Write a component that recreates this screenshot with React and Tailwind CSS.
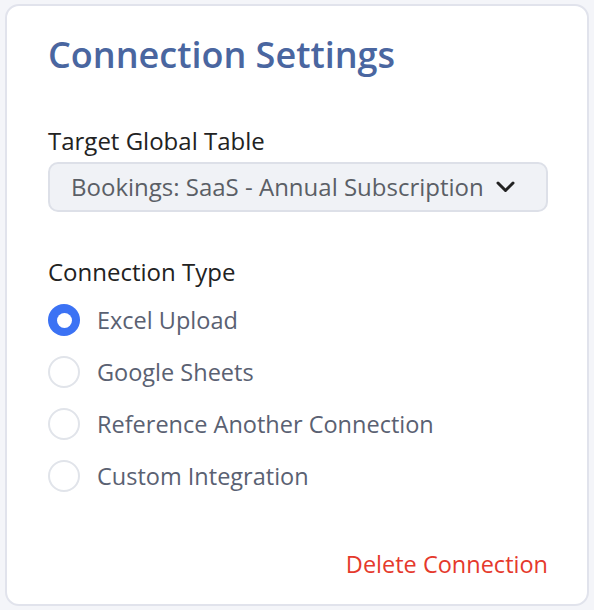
import { useState } from "react";

const types = [
  "Excel Upload",
  "Google Sheets",
  "Reference Another Connection",
  "Custom Integration",
];

const App = () => {
  const [selected, setSelected] = useState("Excel Upload");

  return (
    <div className="min-h-screen bg-[#f4f5f9] pt-[4px] pl-[5px] font-['Open_Sans',sans-serif]">
      <div className="w-[584px] h-[602px] bg-white border-2 border-[#e1e3ec] rounded-[14px] flex flex-col pl-[41px] pr-[39px] pt-[27px] pb-[25px]">
        <h2 className="text-[36px] font-semibold text-[#4a66a0] leading-[44px]">Connection Settings</h2>

        <label className="mt-[49px] text-[24px] text-[#222] leading-[30px]">Target Global Table</label>
        <div className="mt-[6px] h-[50px] bg-[#f0f2f6] border-2 border-[#dde0e8] rounded-[10px] flex items-center pl-[21px] pr-[31px] justify-between">
          <span className="text-[24px] text-[#5b5f66] leading-[30px]">Bookings: SaaS - Annual Subscription</span>
          <svg width="19" height="12" viewBox="0 0 19 12" fill="none">
            <path d="M2 2 L9.5 9.5 L17 2" stroke="#222" strokeWidth="3" strokeLinecap="round" strokeLinejoin="round" />
          </svg>
        </div>

        <label className="mt-[45px] text-[24px] text-[#222] leading-[30px]">Connection Type</label>
        <div className="mt-[17px] flex flex-col gap-[20px]">
          {types.map((t) => (
            <div key={t} className="flex items-center gap-[17px] cursor-pointer" onClick={() => setSelected(t)}>
              {selected === t ? (
                <span className="w-[32px] h-[32px] shrink-0 rounded-full bg-[#3b72f4] flex items-center justify-center">
                  <span className="w-[15px] h-[15px] rounded-full bg-white" />
                </span>
              ) : (
                <span className="w-[32px] h-[32px] shrink-0 rounded-full border-2 border-[#e1e4ea] bg-white" />
              )}
              <span className="text-[23.5px] text-[#5a6172] leading-[30px]">{t}</span>
            </div>
          ))}
        </div>

        <div className="mt-auto flex justify-end">
          <button className="text-[23.5px] text-[#e5392c] leading-[30px]">Delete Connection</button>
        </div>
      </div>
    </div>
  );
};

export default App;
